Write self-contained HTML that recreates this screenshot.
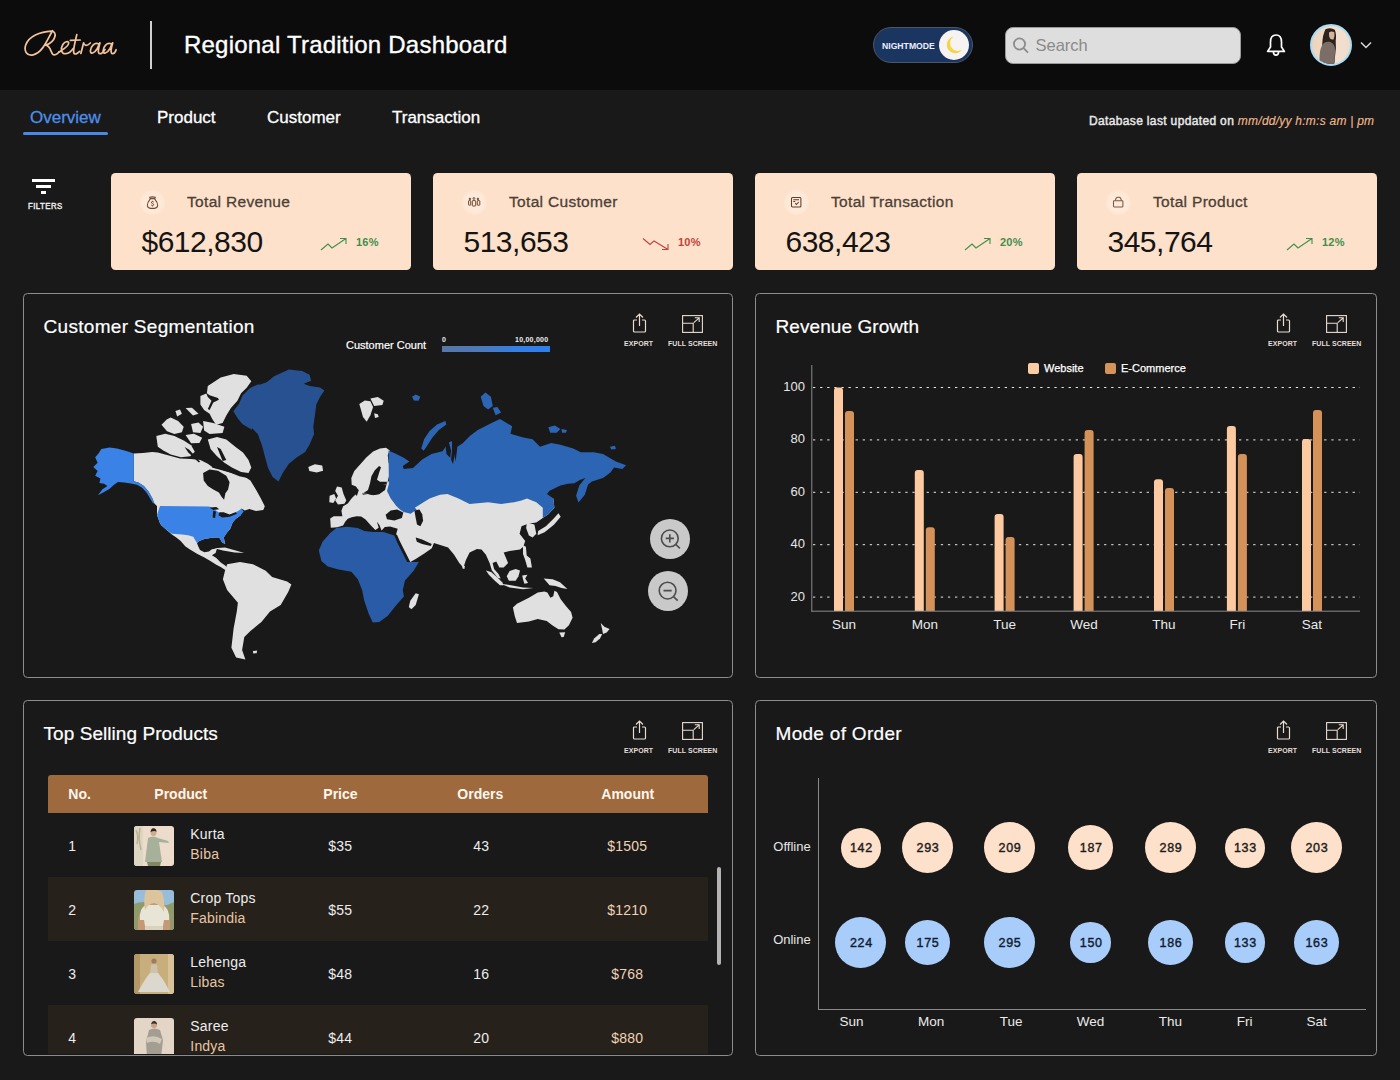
<!DOCTYPE html>
<html><head><meta charset="utf-8">
<style>
*{margin:0;padding:0;box-sizing:border-box}
html,body{width:1400px;height:1080px;overflow:hidden;background:#191919;font-family:"Liberation Sans",sans-serif;color:#fff}
.abs{position:absolute}
#hdr{position:absolute;left:0;top:0;width:1400px;height:90px;background:#0c0c0c}
.t{position:absolute;white-space:nowrap;line-height:1}
.card{position:absolute;top:173px;width:299.7px;height:97.3px;background:#fee1ca;border-radius:4.5px}
.panel{position:absolute;border:1.3px solid #8c8c8c;border-radius:4.5px;background:#191919}
.ptitle{position:absolute;left:19.5px;top:22.5px;font-size:19px;color:#fff;line-height:1;white-space:nowrap;letter-spacing:0.3px;-webkit-text-stroke:0.2px #fff}
.tool{position:absolute;top:0}
.tool .lbl{position:absolute;font-size:7.5px;font-weight:bold;color:#e6e0dc;white-space:nowrap;letter-spacing:0.3px;line-height:1}
.ic{position:absolute;left:29px;top:17px;width:25px;height:25px;border-radius:50%;background:radial-gradient(circle,#ffe9d9 50%,#fee3cf 85%,#fee1ca 100%)}
.ct{position:absolute;left:76px;top:20.8px;font-size:15.5px;letter-spacing:0.32px;color:#4b3f37;white-space:nowrap;line-height:1;-webkit-text-stroke:0.3px #4b3f37}
.cv{position:absolute;left:30.5px;top:53.6px;font-size:30px;letter-spacing:-0.5px;color:#141414;white-space:nowrap;line-height:1}
.up{left:209px;top:64px}
.cp{position:absolute;left:245px;top:64px;font-size:11px;letter-spacing:0.2px;font-weight:bold;color:#3f8f4c;white-space:nowrap;line-height:1}
.zb{width:40px;height:40px;border-radius:50%;background:#c9c9c9}
.tl{font-size:7px;font-weight:bold;color:#e3ddd8;letter-spacing:0.05px}
.yl{font-size:13px;color:#e6e6e6;text-align:right}
.xl{font-size:13.5px;color:#eaeaea;text-align:center}
.th{font-size:14px;font-weight:bold;color:#fff6ee}
.td{font-size:14px;color:#ededed;letter-spacing:0.2px}
.bub{border-radius:50%;display:flex;align-items:center;justify-content:center;font-size:12.5px;-webkit-text-stroke:0.4px currentColor;letter-spacing:0.7px;padding-left:1.5px;padding-top:1.2px}
</style></head>
<body>
<div id="hdr">
  <svg class="abs" style="left:20px;top:25px" width="100" height="35" viewBox="0 0 1400 490" fill="none" stroke="#f3c39e" stroke-width="24" stroke-linecap="round" stroke-linejoin="round"><path d="M455,80 C385,200 320,385 185,418 C95,440 52,360 80,280 C120,160 280,92 440,85 C525,85 510,235 360,282"/><path d="M360,282 C430,292 428,382 460,410 C482,430 520,410 545,378"/><path d="M545,378 C605,338 685,300 682,250 C678,218 628,232 600,272 C562,332 580,410 642,402 C682,396 722,360 745,328"/><path d="M795,135 C775,222 742,340 752,390 C762,422 802,402 835,368"/><path d="M705,215 L842,210"/><path d="M852,398 C872,330 882,282 890,250 C902,292 932,302 985,252"/><path d="M1100,262 C1040,240 990,300 985,362 C985,412 1040,402 1080,332 C1100,292 1110,262 1120,250 C1100,320 1080,402 1120,402 C1150,402 1170,372 1190,342"/><path d="M1275,262 C1215,240 1168,300 1163,362 C1163,412 1218,402 1258,332 C1278,292 1288,262 1298,250 C1278,320 1258,402 1298,402 C1320,402 1336,376 1346,346"/></svg>
  <div class="abs" style="left:150px;top:21px;width:1.5px;height:48px;background:#cfcfcf"></div>
  <div class="t" style="left:184px;top:33px;font-size:24px;color:#fff;letter-spacing:0.22px;-webkit-text-stroke:0.35px #fff">Regional Tradition Dashboard</div>
  <!-- nightmode -->
  <div class="abs" style="left:873px;top:27px;width:100px;height:36px;border-radius:18px;background:#1b3561;border:1.5px solid #4d5666"></div>
  <div class="t" style="left:882px;top:41.6px;font-size:9px;font-weight:bold;color:#eef;transform:scaleX(0.96);transform-origin:0 0">NIGHTMODE</div>
  <div class="abs" style="left:939px;top:30px;width:30px;height:30px;border-radius:50%;background:#f6f3f2"></div>
  <svg class="abs" style="left:939px;top:30px" width="30" height="30" viewBox="0 0 30 30"><path d="M14.6,6.6 A8.4,8.4 0 1 0 23.2,19.6 A6.6,6.6 0 1 1 14.6,6.6Z" fill="#f4d544"/></svg>
  <!-- search -->
  <div class="abs" style="left:1004.5px;top:26.5px;width:236px;height:37px;border-radius:8px;background:#dedede;border:1px solid #9a9a9a"></div>
  <svg class="abs" style="left:1010px;top:34px" width="22" height="22" viewBox="0 0 22 22" fill="none" stroke="#8c8c8c" stroke-width="1.8"><circle cx="9.5" cy="10" r="5.6"/><path d="M13.6,14.2 L18,18.6"/></svg>
  <div class="t" style="left:1035.5px;top:37.3px;font-size:16.5px;color:#8a8a8a">Search</div>
  <!-- bell -->
  <svg class="abs" style="left:1264px;top:32px" width="24" height="26" viewBox="0 0 24 26" fill="none" stroke="#fff" stroke-width="1.7" stroke-linejoin="round"><path d="M12,3 Q6.5,3 6.5,10 V15 L3.6,19.4 H20.4 L17.5,15 V10 Q17.5,3 12,3Z"/><path d="M9.4,20 Q9.6,23.2 12,23.2 Q14.4,23.2 14.6,20"/></svg>
  <!-- avatar -->
  <div class="abs" style="left:1310px;top:24px;width:42px;height:42px;border-radius:50%;background:linear-gradient(90deg,#ecd3bc,#f3e0cf 60%,#f1dccb);border:2px solid #a6dcf6;overflow:hidden">
    <svg width="38" height="38" viewBox="0 0 38 38"><path d="M13.5,3.3 Q18.6,0.8 22.8,3.8 Q24.6,8 23.7,14.9 Q24.4,22 23.2,28.8 L22.3,38 L12,38 Q9.5,26 10.3,17.2 Q10.6,9 13.5,3.3Z" fill="#2e221c"/><path d="M17,6.5 Q19.5,4.6 22.3,6.2 Q23,10.5 21.6,13.2 Q19.8,14.2 18,12.6 Q16.6,10 17,6.5Z" fill="#d6b59c"/><path d="M7.5,38 Q7.4,30 7.9,26.5 Q8.6,22 9.8,20 Q11.5,17 13,16.3 Q15.5,15.4 17.7,15.8 Q20,16.6 21.3,18.1 Q23,20.5 23.1,23.7 L22.3,38Z" fill="#7b6e66"/></svg>
  </div>
  <svg class="abs" style="left:1359px;top:40px" width="14" height="10" viewBox="0 0 14 10" fill="none" stroke="#d8d8d8" stroke-width="1.5"><path d="M2,2.5 L7,7.5 L12,2.5"/></svg>
</div>

<!-- nav -->
<div class="t" style="left:30px;top:109px;font-size:17px;color:#4d8fe8;-webkit-text-stroke:0.3px #4d8fe8">Overview</div>
<div class="abs" style="left:23px;top:132px;width:85px;height:3px;background:#4a8ae6;border-radius:2px"></div>
<div class="t" style="left:157px;top:109px;font-size:17px;color:#fff;-webkit-text-stroke:0.3px #fff">Product</div>
<div class="t" style="left:267px;top:109px;font-size:17px;color:#fff;-webkit-text-stroke:0.3px #fff">Customer</div>
<div class="t" style="left:392px;top:109px;font-size:17px;color:#fff;-webkit-text-stroke:0.3px #fff">Transaction</div>
<div class="t" style="left:1089px;top:115px;font-size:12px;color:#e8e8e8;-webkit-text-stroke:0.45px #e8e8e8;letter-spacing:0.35px">Database last updated on <span style="-webkit-text-stroke:0.15px #f0b88e;font-style:italic;color:#f0b88e;letter-spacing:0.24px">mm/dd/yy h:m:s am | pm</span></div>

<!-- filters -->
<div class="abs" style="left:32px;top:179px;width:23px;height:3px;background:#fff"></div>
<div class="abs" style="left:36px;top:185px;width:15px;height:3px;background:#fff"></div>
<div class="abs" style="left:41px;top:191px;width:5px;height:3px;background:#fff"></div>
<div class="t" style="left:27.7px;top:201.5px;font-size:9px;color:#f2f2f2;-webkit-text-stroke:0.4px #f2f2f2;letter-spacing:0.5px;transform:scaleX(0.87);transform-origin:0 0">FILTERS</div>

<!-- cards -->
<div class="card" style="left:111px">
  <div class="ic"></div>
  <svg class="abs" style="left:35px;top:23px" width="13" height="13" viewBox="0 0 12 12" fill="none" stroke="#6b4a33" stroke-width="1"><path d="M3.5,1.2 Q6,0.4 8.5,1.2 L8,2.6 Q6,2.2 4,2.6Z"/><path d="M4,2.6 Q1,6 1.2,9.2 Q1.6,11.2 4,11.4 L8,11.4 Q10.4,11.2 10.8,9.2 Q11,6 8,2.6"/><path d="M7.2,5.6 Q6,4.8 5,5.6 Q4.6,6.6 6,7 Q7.4,7.4 7,8.4 Q6,9.2 4.8,8.4 M6,4.5V5.2 M6,9V9.6" stroke-width="0.9"/></svg>
  <div class="ct">Total Revenue</div>
  <div class="cv">$612,830</div>
  <svg class="abs up" width="28" height="14" viewBox="0 0 28 14"><path d="M1,13 L8,7 L12,11 L26,1.5 M20,1.5 H26 V7" fill="none" stroke="#3f8f4c" stroke-width="1.1"/></svg>
  <div class="cp">16%</div>
</div>
<div class="card" style="left:433px">
  <div class="ic"></div>
  <svg class="abs" style="left:35px;top:23px" width="14" height="13" viewBox="0 0 14 13" fill="none" stroke="#6a4930" stroke-width="1"><circle cx="1.9" cy="2.9" r="0.75" fill="#6a4930"/><circle cx="5.9" cy="2.5" r="0.9"/><circle cx="9.9" cy="2.9" r="0.75" fill="#6a4930"/><rect x="0.6" y="4.6" width="2.1" height="4.6" rx="0.5"/><rect x="4.3" y="4.6" width="3.4" height="5.4" rx="0.6"/><rect x="9.3" y="4.6" width="2.5" height="4.6" rx="0.5"/></svg>
  <div class="ct">Total Customer</div>
  <div class="cv">513,653</div>
  <svg class="abs up" width="28" height="14" viewBox="0 0 28 14"><path d="M1,1.5 L8,7.5 L12,4 L26,12.5 M20,12.5 H26 V7" fill="none" stroke="#c2413b" stroke-width="1.1"/></svg>
  <div class="cp" style="color:#c2413b">10%</div>
</div>
<div class="card" style="left:755px">
  <div class="ic"></div>
  <svg class="abs" style="left:35px;top:23px" width="14" height="13" viewBox="0 0 14 13" fill="none" stroke="#5e3f28" stroke-width="1.05"><rect x="1.5" y="1.5" width="9.4" height="9.4" rx="1"/><path d="M3.3,3.7 H9 M3.3,5.4 H5.2 M5.3,7.1 L6.4,8.5 L8.7,6"/></svg>
  <div class="ct">Total Transaction</div>
  <div class="cv">638,423</div>
  <svg class="abs up" width="28" height="14" viewBox="0 0 28 14"><path d="M1,13 L8,7 L12,11 L26,1.5 M20,1.5 H26 V7" fill="none" stroke="#3f8f4c" stroke-width="1.1"/></svg>
  <div class="cp">20%</div>
</div>
<div class="card" style="left:1077px">
  <div class="ic"></div>
  <svg class="abs" style="left:35px;top:23px" width="14" height="13" viewBox="0 0 14 13" fill="none" stroke="#755a45" stroke-width="1.05"><rect x="1.5" y="4.8" width="9.4" height="6.1" rx="0.6"/><path d="M3.4,4.5 Q3.9,1.3 5.6,1.3 H7.2 Q8.9,1.3 9.3,4.5"/></svg>
  <div class="ct">Total Product</div>
  <div class="cv">345,764</div>
  <svg class="abs up" width="28" height="14" viewBox="0 0 28 14"><path d="M1,13 L8,7 L12,11 L26,1.5 M20,1.5 H26 V7" fill="none" stroke="#3f8f4c" stroke-width="1.1"/></svg>
  <div class="cp">12%</div>
</div>

<!-- panels -->
<div class="panel" style="left:23px;top:293px;width:710px;height:385px"><div class="ptitle">Customer Segmentation</div>
  <svg class="abs" style="left:608px;top:19px" width="15" height="20" viewBox="0 0 15 20" fill="none" stroke="#e9ddd2" stroke-width="1.2"><path d="M7.5,1 V13 M4,4.5 L7.5,1 L11,4.5"/><path d="M5,7 H2.5 Q1.5,7 1.5,8 V18 Q1.5,19 2.5,19 H12.5 Q13.5,19 13.5,18 V8 Q13.5,7 12.5,7 H10"/></svg>
<div class="t tl" style="left:600px;top:46.4px">EXPORT</div>
<svg class="abs" style="left:658px;top:21px" width="21" height="18" viewBox="0 0 21 18" fill="none" stroke="#e9ddd2" stroke-width="1.1"><rect x="0.6" y="0.6" width="19.8" height="16.8"/><path d="M0.6,8.2 H11.2 V17.4 M11.8,7.6 L17.2,2.8 M12.8,2.8 H17.2 V7"/></svg>
<div class="t tl" style="left:644px;top:46.4px">FULL SCREEN</div>
  <div class="t" style="left:322px;top:46px;font-size:11px;color:#fff;-webkit-text-stroke:0.2px #fff">Customer Count</div>
  <div class="t" style="left:418px;top:41.5px;font-size:7px;font-weight:bold;color:#eee">0</div>
  <div class="t" style="left:491px;top:41.5px;font-size:7px;font-weight:bold;color:#eee;letter-spacing:0.25px">10,00,000</div>
  <div class="abs" style="left:418px;top:52px;width:108px;height:6px;background:linear-gradient(90deg,#5877a6 0%,#4f79b8 35%,#3380e6 70%,#2f7fea 100%)"></div>
  <div class="abs zb" style="left:626px;top:225.2px"><svg width="40" height="40" viewBox="0 0 40 40" fill="none" stroke="#4d4d4d" stroke-width="1.6"><circle cx="19.8" cy="19.4" r="8.4"/><path d="M25.7,25.4 L29.9,29.4 M19.8,15.3 V23.5 M15.7,19.4 H23.9"/></svg></div>
  <div class="abs zb" style="left:624.2px;top:277.3px"><svg width="40" height="40" viewBox="0 0 40 40" fill="none" stroke="#4d4d4d" stroke-width="1.6"><circle cx="19.6" cy="19.6" r="8.4"/><path d="M25.5,25.6 L29.7,29.6 M15.5,19.6 H23.7"/></svg></div>
</div>
<svg class="abs" style="left:80px;top:360px" width="570" height="310" viewBox="80 360 570 310"><path fill="#e0e0e0" d="M133.7,453.5 143.0,453.0 152.2,451.9 157.8,452.6 168.9,455.4 180.0,458.5 191.1,459.1 200.4,460.0 207.8,463.7 213.3,467.8 224.4,471.1 235.6,473.9 244.8,476.7 250.4,480.4 255.9,489.6 260.6,498.0 264.8,506.3 263.3,510.0 255.9,510.9 249.4,509.1 244.8,510.4 241.5,508.5 240.7,515.2 235.6,518.9 232.6,522.6 230.4,528.5 226.7,533.0 223.7,537.4 225.2,544.1 222.2,542.6 219.3,537.4 214.8,537.4 210.4,538.1 204.4,538.9 199.3,541.1 197.0,543.3 198.2,546.3 200.0,550.0 204.4,552.2 208.9,551.5 211.9,549.3 217.0,548.5 215.6,553.0 211.9,555.2 216.3,558.1 220.7,562.6 225.2,565.6 227.4,568.5 225.2,570.0 220.7,567.0 216.3,564.8 210.4,561.1 204.4,557.4 197.0,553.7 189.6,549.3 185.2,546.3 180.7,541.1 176.3,537.4 171.9,534.4 166.7,530.0 161.5,525.6 160.0,523.3 157.0,515.0 157.0,506.0 154.4,503.5 152.2,498.0 148.5,491.5 143.9,485.9 138.3,482.6 133.7,481.3Z"/><path fill="#3a82e6" d="M160.0,506.0 208.9,506.6 213.3,508.5 218.5,512.2 222.2,515.2 226.7,515.9 232.6,513.7 238.5,510.7 241.5,508.5 243.7,511.5 240.7,515.2 235.6,518.9 232.6,522.6 230.4,528.5 226.7,533.0 223.7,537.4 225.2,544.1 222.2,542.6 219.3,537.4 214.8,537.4 210.4,538.1 204.4,538.9 199.3,541.1 197.0,543.3 193.3,536.7 188.1,535.2 182.2,534.4 171.9,533.7 166.7,530.0 161.5,525.6 160.0,523.3 157.0,515.0Z"/><path fill="#191919" d="M209.6,507.5 216.3,507.0 219.3,509.3 213.3,510.0Z"/><path fill="#191919" d="M213.3,510.7 216.0,511.5 215.1,518.1 212.6,517.4Z"/><path fill="#191919" d="M219.3,512.2 223.7,512.2 229.6,514.4 235.6,512.2 237.0,513.7 229.6,516.7 222.2,517.4 218.5,515.2Z"/><path fill="#191919" d="M203.1,473.0 209.6,469.6 218.0,470.7 226.3,475.7 229.6,482.2 228.1,489.6 225.4,493.3 224.1,499.8 221.7,497.0 218.9,492.4 213.3,489.6 207.8,485.9 203.7,480.4Z"/><path fill="#191919" d="M211.5,464.6 220.7,463.3 231.9,467.8 243.0,473.3 247.6,478.1 239.3,476.3 230.0,472.6 220.7,469.3 212.4,467.8Z"/><path fill="#3a82e6" d="M101.3,448.9 109.6,447.4 117.0,448.5 126.3,451.1 133.7,453.5 133.7,481.3 138.3,482.6 143.9,485.9 148.5,491.5 152.2,498.0 154.4,503.5 152.8,503.0 150.2,498.5 146.5,492.6 142.2,487.8 137.0,484.8 132.2,483.7 124.4,482.6 118.0,481.9 114.3,484.4 109.6,488.7 104.1,491.9 98.0,495.2 102.2,489.6 107.4,485.9 104.1,483.7 99.4,483.1 100.4,478.5 95.2,475.7 97.6,471.1 93.3,467.0 97.6,462.8 95.2,457.2 98.5,453.5Z"/><path fill="#e0e0e0" d="M200.4,396.1 206.9,393.3 207.8,385.9 220.7,377.6 233.7,373.9 246.7,375.7 251.3,381.3 246.7,387.8 241.1,393.3 237.4,400.7 230.9,408.1 226.3,415.6 222.6,423.0 216.1,424.8 212.4,419.3 209.6,413.7 204.1,410.0 200.4,404.4Z"/><path fill="#e0e0e0" d="M161.5,424.8 166.7,419.6 170.7,417.4 178.1,421.1 183.7,426.7 181.9,432.2 174.4,434.1 167.0,431.3Z"/><path fill="#e0e0e0" d="M175.4,410.9 180.0,409.6 181.9,413.7 177.2,416.5Z"/><path fill="#e0e0e0" d="M185.6,408.1 192.0,407.8 198.5,413.7 193.0,415.6Z"/><path fill="#e0e0e0" d="M191.1,423.9 198.5,422.6 203.1,426.7 200.4,433.1 193.0,432.2Z"/><path fill="#e0e0e0" d="M203.1,421.1 213.3,423.0 224.4,426.7 222.6,433.1 209.6,434.1 204.1,430.4Z"/><path fill="#e0e0e0" d="M156.3,435.9 165.2,433.7 174.4,435.9 183.7,440.6 191.1,445.2 194.8,451.7 190.2,456.3 180.9,457.2 170.7,454.4 163.3,450.4 157.8,446.7Z"/><path fill="#e0e0e0" d="M185.6,435.0 193.9,433.7 202.2,437.8 199.4,443.0 191.1,443.3Z"/><path fill="#e0e0e0" d="M207.8,439.6 217.0,436.9 226.3,439.6 235.6,447.0 243.0,452.6 248.5,460.0 251.3,467.4 248.5,473.0 241.1,472.0 231.9,467.4 224.4,462.8 217.0,456.3 210.6,448.9Z"/><path fill="#191919" d="M205.9,392.4 209.6,395.2 218.0,398.0 218.9,399.8 213.3,402.6 209.6,410.0 207.8,409.1 211.5,400.7 207.8,397.0Z"/><path fill="#191919" d="M184.6,447.0 189.3,449.8 200.4,461.9 198.5,462.2 188.3,452.6Z"/><path fill="#191919" d="M217.0,447.0 220.7,448.9 226.3,460.0 222.6,460.9Z"/><path fill="#275190" d="M274.1,376.3 288.9,369.6 302.2,371.1 309.6,374.8 311.1,380.7 303.7,383.7 309.6,385.9 320.0,387.4 324.4,390.4 320.0,397.0 316.3,404.4 314.8,416.3 313.3,426.7 314.1,434.1 309.6,444.4 305.2,451.9 296.3,457.8 288.9,463.7 283.0,472.6 278.5,481.5 272.6,477.0 268.1,468.1 265.2,457.8 262.2,445.9 257.8,434.1 251.9,428.1 251.9,429.8 242.6,424.3 238.0,418.7 233.3,411.3 238.9,403.9 242.6,395.6 250.0,388.1 260.0,383.5 257.8,385.2 266.7,382.2Z"/><path fill="#e0e0e0" d="M330.8,527.8 330.2,518.6 333.7,516.2 342.4,516.2 341.4,510.8 343.1,506.3 347.8,503.4 351.7,498.3 355.5,494.4 356.8,496.0 360.3,485.7 362.8,494.7 368.0,494.1 373.1,495.3 379.1,494.3 385.1,490.0 386.4,484.8 387.7,481.4 396.3,480.0 429.6,483.7 495.6,483.7 542.8,494.8 553.3,498.5 554.4,507.8 548.3,514.3 542.8,518.0 536.3,522.6 528.9,523.5 521.5,526.3 519.6,533.7 525.2,541.1 523.3,546.7 520.0,549.6 509.6,551.1 503.7,552.6 505.9,557.8 508.1,563.0 503.7,567.4 499.3,567.4 496.3,561.5 492.6,563.0 494.1,568.9 498.5,574.1 500.7,578.5 497.8,577.8 491.9,570.4 489.6,563.0 485.9,554.8 481.5,549.6 477.0,548.9 469.6,552.6 465.9,560.0 463.4,567.7 459.3,563.0 454.1,554.8 448.1,547.4 433.9,542.9 431.8,548.2 424.3,553.6 415.7,558.9 410.3,562.1 405.0,551.4 399.6,540.7 396.8,534.3 395.8,535.3 397.7,528.8 390.0,526.5 384.8,526.9 381.6,530.4 379.4,525.0 376.9,521.8 378.7,527.8 375.3,530.1 370.7,525.2 365.6,519.6 361.2,516.5 356.6,516.2 351.7,517.3 347.8,518.8 345.2,521.8 343.1,525.6 337.3,527.3Z"/><path fill="#e0e0e0" d="M351.7,484.8 351.3,478.0 354.3,471.1 360.3,464.3 366.3,457.4 373.1,451.4 380.0,448.4 386.0,447.8 389.8,450.6 387.7,454.9 388.6,462.6 390.3,468.6 389.4,474.6 387.7,481.4 386.4,484.8 380.0,484.8 376.6,489.1 373.1,493.4 366.3,493.8 362.8,493.4 357.7,489.1 356.0,486.6Z"/><path fill="#191919" d="M379.1,466.0 381.0,467.3 379.1,472.8 377.0,479.7 380.0,481.8 386.8,481.8 386.8,484.2 381.7,485.3 383.8,489.1 379.1,493.8 373.1,495.0 366.7,493.8 363.3,493.2 368.0,490.0 370.1,483.1 371.4,476.3 374.8,470.3Z"/><path fill="#e0e0e0" d="M527.0,522.6 534.4,524.4 536.3,533.7 532.6,537.4 528.9,535.6 526.1,528.1Z"/><path fill="#e0e0e0" d="M558.5,513.3 560.7,516.7 553.9,524.8 544.6,532.2 537.6,535.2 538.1,530.9 545.9,526.3 553.0,519.3Z"/><path fill="#2d65b5" d="M388.5,450.4 396.3,454.1 403.7,457.8 409.3,461.5 402.8,466.1 403.7,468.9 413.0,468.0 422.2,459.6 431.5,454.1 442.6,451.3 448.1,443.0 451.9,441.1 453.7,450.4 455.6,461.5 457.4,446.7 463.0,443.0 470.4,435.6 477.8,430.0 485.2,426.3 492.6,422.6 500.0,418.9 512.2,426.3 510.4,433.7 523.3,437.4 532.6,439.3 540.0,446.7 551.1,443.0 560.4,444.8 573.3,448.5 580.7,452.2 593.7,452.2 603.0,454.1 615.9,461.5 626.1,465.2 622.4,468.9 614.1,467.4 610.4,472.6 603.0,478.1 591.9,481.5 588.1,484.6 584.8,494.8 578.5,502.6 576.1,495.7 579.3,485.6 585.4,478.1 579.8,480.0 574.3,483.3 567.8,483.7 560.4,485.6 549.6,490.7 547.0,493.9 553.3,498.5 554.4,507.8 548.3,514.3 542.8,518.0 542.8,507.8 536.3,502.2 527.0,498.5 521.5,500.4 514.1,502.2 501.1,504.1 488.1,502.2 469.6,504.1 458.5,498.5 447.4,493.9 440.0,494.8 429.6,498.5 414.8,507.8 416.7,509.6 410.7,513.7 403.7,511.9 400.0,509.6 396.3,505.9 390.7,498.5 387.0,491.1 388.9,483.7Z"/><path fill="#191919" d="M443.7,441.1 448.3,440.2 451.1,450.4 450.2,457.8 446.5,454.1 445.6,446.7Z"/><path fill="#191919" d="M452.0,441.1 455.7,443.0 454.8,454.1 453.0,464.3 451.1,459.6 452.0,450.4Z"/><path fill="#2d65b5" d="M480.7,396.7 485.4,392.6 490.9,396.7 492.8,405.9 488.1,409.6 483.5,405.9Z"/><path fill="#2d65b5" d="M492.8,407.8 497.4,406.9 501.1,412.4 495.6,415.2Z"/><path fill="#2d65b5" d="M548.3,427.2 554.8,425.4 560.4,429.1 556.7,432.8 550.2,432.8Z"/><path fill="#2d65b5" d="M561.3,429.1 566.9,430.0 565.9,432.8 562.2,432.8Z"/><path fill="#2d65b5" d="M610.0,446.7 615.0,445.7 615.9,448.9 611.3,449.4Z"/><path fill="#2d65b5" d="M421.3,448.5 424.1,439.3 429.6,430.9 437.0,424.4 445.4,421.1 446.3,424.4 438.9,430.0 432.4,437.4 427.8,444.8 423.7,450.7Z"/><path fill="#2d65b5" d="M412.0,396.7 415.7,394.4 420.4,396.7 418.5,400.7 413.9,400.4Z"/><path fill="#191919" d="M385.6,514.8 390.7,510.6 397.2,509.6 403.3,512.4 401.9,518.0 394.4,520.4 387.0,519.3Z"/><path fill="#191919" d="M414.4,510.6 419.4,509.6 422.2,514.3 423.1,520.7 420.4,526.3 417.0,524.4 415.7,518.0Z"/><path fill="#191919" d="M415.7,537.5 422.1,539.6 431.8,543.9 430.7,546.1 422.1,543.9 416.8,541.8Z"/><path fill="#e0e0e0" d="M337.0,486.5 341.7,487.4 343.5,493.9 346.3,500.4 344.4,503.7 338.0,504.4 335.2,500.4 338.0,495.7 335.2,491.1Z"/><path fill="#e0e0e0" d="M329.6,495.7 334.3,493.9 336.1,498.5 333.3,503.1 329.3,502.2Z"/><path fill="#e0e0e0" d="M308.3,467.0 314.8,464.3 322.2,465.6 323.1,470.7 316.7,472.6 309.3,471.1Z"/><path fill="#e0e0e0" d="M359.3,404.1 364.8,400.4 370.4,401.3 373.1,406.9 370.4,415.2 366.7,421.7 363.0,417.0Z"/><path fill="#e0e0e0" d="M370.4,398.5 377.8,397.0 383.7,400.7 382.4,405.0 374.1,405.9Z"/><path fill="#e0e0e0" d="M374.1,413.3 377.8,414.3 378.7,417.0 375.0,418.0Z"/><path fill="#2a5ba6" d="M318.8,550.4 322.5,541.8 330.0,533.2 336.4,527.9 347.1,526.8 357.8,527.9 364.3,531.1 372.8,532.1 383.6,532.1 394.3,535.4 397.5,542.9 402.8,553.6 407.1,562.1 418.9,562.1 413.6,570.7 405.0,580.4 402.8,590.0 403.9,596.4 396.4,605.0 387.8,615.7 379.3,622.1 372.8,622.6 368.6,613.6 364.3,600.7 362.1,590.0 357.8,579.3 351.4,571.8 338.6,569.6 327.8,566.4 321.4,561.1Z"/><path fill="#e0e0e0" d="M410.3,600.7 415.7,593.2 418.9,594.3 415.7,605.0 411.4,609.3 408.8,607.1Z"/><path fill="#e0e0e0" d="M225.0,570.7 227.1,564.3 240.0,562.1 252.9,564.3 265.7,570.7 272.1,577.1 287.1,581.4 291.4,584.6 288.2,592.1 280.7,605.0 270.0,611.4 261.4,622.1 250.7,630.7 244.3,637.1 242.1,650.0 245.4,659.6 236.1,657.5 231.4,647.8 233.6,628.6 236.8,611.4 237.9,602.8 227.1,590.0 222.9,579.3Z"/><path fill="#e0e0e0" d="M214.3,548.2 225.0,547.6 235.7,550.4 244.3,553.1 234.6,552.5 222.9,550.4Z"/><path fill="#e0e0e0" d="M252.9,651.1 257.1,650.6 256.7,653.2 253.3,653.4Z"/><path fill="#e0e0e0" d="M485.9,570.4 491.1,571.9 497.0,577.0 502.2,582.2 503.7,585.2 500.0,585.2 494.8,580.7 488.9,574.8Z"/><path fill="#e0e0e0" d="M506.7,576.3 509.6,571.1 515.6,568.9 520.0,570.4 518.5,576.3 515.6,580.7 508.9,580.7Z"/><path fill="#e0e0e0" d="M500.7,583.7 511.1,585.2 523.0,587.4 533.3,588.1 523.0,589.3 509.6,587.4Z"/><path fill="#e0e0e0" d="M522.2,575.6 527.4,574.8 525.2,578.5 528.1,583.0 524.4,583.7 523.0,579.3Z"/><path fill="#e0e0e0" d="M523.0,545.2 525.9,546.7 526.7,555.6 530.4,558.5 531.9,567.4 527.4,567.4 525.2,560.0 523.0,554.1Z"/><path fill="#e0e0e0" d="M543.7,578.5 552.6,579.3 560.0,582.2 567.4,588.9 561.5,588.1 555.6,585.9 549.6,585.2Z"/><path fill="#e0e0e0" d="M512.9,607.4 517.0,603.7 528.9,597.8 537.8,592.6 544.4,591.4 547.4,592.6 550.4,597.8 553.3,596.3 554.4,590.8 557.0,591.9 560.7,599.3 565.9,605.9 571.1,611.9 572.6,617.8 568.9,625.2 564.4,629.6 558.5,629.3 552.6,625.5 546.7,621.0 537.8,619.0 528.9,621.5 517.0,623.0 514.8,616.3Z"/><path fill="#e0e0e0" d="M559.3,632.6 565.2,632.3 563.7,637.0 561.5,637.3Z"/><path fill="#e0e0e0" d="M600.7,623.0 604.4,626.7 609.6,628.9 606.7,632.6 603.0,634.1 602.2,629.6Z"/><path fill="#e0e0e0" d="M602.2,634.1 600.0,638.5 595.6,642.2 591.9,643.0 594.1,638.5 599.3,634.1Z"/><path fill="#e0e0e0" d="M462.2,565.2 464.9,565.9 464.4,568.9 462.5,568.6Z"/></svg>
<div class="panel" style="left:755px;top:293px;width:622px;height:385px"><div class="ptitle" style="letter-spacing:0.07px">Revenue Growth</div>
  <svg class="abs" style="left:520px;top:19px" width="15" height="20" viewBox="0 0 15 20" fill="none" stroke="#e9ddd2" stroke-width="1.2"><path d="M7.5,1 V13 M4,4.5 L7.5,1 L11,4.5"/><path d="M5,7 H2.5 Q1.5,7 1.5,8 V18 Q1.5,19 2.5,19 H12.5 Q13.5,19 13.5,18 V8 Q13.5,7 12.5,7 H10"/></svg>
<div class="t tl" style="left:512px;top:46.4px">EXPORT</div>
<svg class="abs" style="left:570px;top:21px" width="21" height="18" viewBox="0 0 21 18" fill="none" stroke="#e9ddd2" stroke-width="1.1"><rect x="0.6" y="0.6" width="19.8" height="16.8"/><path d="M0.6,8.2 H11.2 V17.4 M11.8,7.6 L17.2,2.8 M12.8,2.8 H17.2 V7"/></svg>
<div class="t tl" style="left:556px;top:46.4px">FULL SCREEN</div>
  <div class="abs" style="left:272px;top:69px;width:11px;height:11px;border-radius:2px;background:#fdcba1"></div>
  <div class="t" style="left:288px;top:69px;font-size:11px;color:#fff;-webkit-text-stroke:0.25px #fff">Website</div>
  <div class="abs" style="left:349px;top:69px;width:11px;height:11px;border-radius:2px;background:#d4935b"></div>
  <div class="t" style="left:365px;top:69px;font-size:11px;color:#fff;-webkit-text-stroke:0.25px #fff">E-Commerce</div>
</div>
<svg class="abs" style="left:760px;top:355px" width="610" height="290" viewBox="760 355 610 290"><line x1="813" y1="387.5" x2="1360" y2="387.5" stroke="#e8e8e8" stroke-width="1" stroke-dasharray="2.3 4.8"/><line x1="813" y1="439.9" x2="1360" y2="439.9" stroke="#e8e8e8" stroke-width="1" stroke-dasharray="2.3 4.8"/><line x1="813" y1="492.3" x2="1360" y2="492.3" stroke="#e8e8e8" stroke-width="1" stroke-dasharray="2.3 4.8"/><line x1="813" y1="544.7" x2="1360" y2="544.7" stroke="#e8e8e8" stroke-width="1" stroke-dasharray="2.3 4.8"/><line x1="813" y1="597.1" x2="1360" y2="597.1" stroke="#e8e8e8" stroke-width="1" stroke-dasharray="2.3 4.8"/><path d="M834,611 V390.5 Q834,387.5 837,387.5 H840 Q843,387.5 843,390.5 V611Z" fill="#fdc9a0"/><path d="M845,611 V414.08000000000004 Q845,411.08000000000004 848,411.08000000000004 H851 Q854,411.08000000000004 854,414.08000000000004 V611Z" fill="#d4925a"/><path d="M914.8,611 V473.03000000000003 Q914.8,470.03000000000003 917.8,470.03000000000003 H920.8 Q923.8,470.03000000000003 923.8,473.03000000000003 V611Z" fill="#fdc9a0"/><path d="M925.8,611 V530.146 Q925.8,527.146 928.8,527.146 H931.8 Q934.8,527.146 934.8,530.146 V611Z" fill="#d4925a"/><path d="M994.6,611 V517.046 Q994.6,514.046 997.6,514.046 H1000.6 Q1003.6,514.046 1003.6,517.046 V611Z" fill="#fdc9a0"/><path d="M1005.6,611 V540.102 Q1005.6,537.102 1008.6,537.102 H1011.6 Q1014.6,537.102 1014.6,540.102 V611Z" fill="#d4925a"/><path d="M1073.6,611 V457.048 Q1073.6,454.048 1076.6,454.048 H1079.6 Q1082.6,454.048 1082.6,457.048 V611Z" fill="#fdc9a0"/><path d="M1084.6,611 V432.944 Q1084.6,429.944 1087.6,429.944 H1090.6 Q1093.6,429.944 1093.6,432.944 V611Z" fill="#d4925a"/><path d="M1154,611 V482.20000000000005 Q1154,479.20000000000005 1157,479.20000000000005 H1160 Q1163,479.20000000000005 1163,482.20000000000005 V611Z" fill="#fdc9a0"/><path d="M1165,611 V491.108 Q1165,488.108 1168,488.108 H1171 Q1174,488.108 1174,491.108 V611Z" fill="#d4925a"/><path d="M1226.9,611 V429.014 Q1226.9,426.014 1229.9,426.014 H1232.9 Q1235.9,426.014 1235.9,429.014 V611Z" fill="#fdc9a0"/><path d="M1237.9,611 V457.048 Q1237.9,454.048 1240.9,454.048 H1243.9 Q1246.9,454.048 1246.9,457.048 V611Z" fill="#d4925a"/><path d="M1302,611 V442.11400000000003 Q1302,439.11400000000003 1305,439.11400000000003 H1308 Q1311,439.11400000000003 1311,442.11400000000003 V611Z" fill="#fdc9a0"/><path d="M1313,611 V413.03200000000004 Q1313,410.03200000000004 1316,410.03200000000004 H1319 Q1322,410.03200000000004 1322,413.03200000000004 V611Z" fill="#d4925a"/><line x1="811.8" y1="365" x2="811.8" y2="611.5" stroke="#8a8a8a" stroke-width="1"/><line x1="811.3" y1="611.2" x2="1360" y2="611.2" stroke="#8a8a8a" stroke-width="1"/></svg><div class="t yl" style="left:745px;top:380.0px;width:60px">100</div><div class="t yl" style="left:745px;top:432.4px;width:60px">80</div><div class="t yl" style="left:745px;top:484.8px;width:60px">60</div><div class="t yl" style="left:745px;top:537.2px;width:60px">40</div><div class="t yl" style="left:745px;top:589.6px;width:60px">20</div><div class="t xl" style="left:814px;top:618px;width:60px">Sun</div><div class="t xl" style="left:894.8px;top:618px;width:60px">Mon</div><div class="t xl" style="left:974.6px;top:618px;width:60px">Tue</div><div class="t xl" style="left:1054px;top:618px;width:60px">Wed</div><div class="t xl" style="left:1134px;top:618px;width:60px">Thu</div><div class="t xl" style="left:1207.3px;top:618px;width:60px">Fri</div><div class="t xl" style="left:1282px;top:618px;width:60px">Sat</div>
<div class="panel" style="left:23px;top:700px;width:710px;height:356px;overflow:hidden"><div class="ptitle" style="letter-spacing:0.06px">Top Selling Products</div>
  <svg class="abs" style="left:608px;top:19px" width="15" height="20" viewBox="0 0 15 20" fill="none" stroke="#e9ddd2" stroke-width="1.2"><path d="M7.5,1 V13 M4,4.5 L7.5,1 L11,4.5"/><path d="M5,7 H2.5 Q1.5,7 1.5,8 V18 Q1.5,19 2.5,19 H12.5 Q13.5,19 13.5,18 V8 Q13.5,7 12.5,7 H10"/></svg>
<div class="t tl" style="left:600px;top:46.4px">EXPORT</div>
<svg class="abs" style="left:658px;top:21px" width="21" height="18" viewBox="0 0 21 18" fill="none" stroke="#e9ddd2" stroke-width="1.1"><rect x="0.6" y="0.6" width="19.8" height="16.8"/><path d="M0.6,8.2 H11.2 V17.4 M11.8,7.6 L17.2,2.8 M12.8,2.8 H17.2 V7"/></svg>
<div class="t tl" style="left:644px;top:46.4px">FULL SCREEN</div>
  <div class="abs" style="left:24.3px;top:74px;width:660px;height:279px;overflow:hidden"><div class="abs" style="left:0;top:0;width:660px;height:38px;background:#9e693d;border-radius:3px 3px 0 0"></div><div class="t th" style="left:20px;top:12.3px">No.</div><div class="t th" style="left:106px;top:12.3px">Product</div><div class="t th" style="left:275px;top:12.3px">Price</div><div class="t th" style="left:409px;top:12.3px">Orders</div><div class="t th" style="left:553px;top:12.3px">Amount</div><div class="t td" style="left:20px;top:64px">1</div><div class="abs" style="left:86px;top:51px;width:40px;height:40px;border-radius:3px;overflow:hidden"><svg width="40" height="40" viewBox="0 0 40 40"><rect width="40" height="40" fill="#eddccb"/><rect x="0" y="0" width="9" height="40" fill="#dcd6c2"/><path d="M2,4 Q5,10 3,18 M6,2 Q4,12 7,24" stroke="#b9b394" stroke-width="1.5" fill="none"/><path d="M14,12 Q19,9 24,12 L34,15 L35,17 L25,16 L28,36 L11,36 L13,20Z" fill="#a7b09a"/><path d="M13,36 L27,36 L26,40 L14,40Z" fill="#7f8862"/><ellipse cx="19.5" cy="6.5" rx="3" ry="3.6" fill="#d2ab8e"/><path d="M16.5,6 Q17,2 19.5,2.2 Q22.5,2.5 22.5,6 Q21,4 16.5,6Z" fill="#2e241d"/></svg></div><div class="t td" style="left:142px;top:52.3px">Kurta</div><div class="t td" style="left:142px;top:72px;color:#e6c6a4">Biba</div><div class="t td" style="left:252px;top:64px;width:80px;text-align:center">$35</div><div class="t td" style="left:393px;top:64px;width:80px;text-align:center">43</div><div class="t td" style="left:539px;top:64px;width:80px;text-align:center;color:#f0d2b4">$1505</div><div class="abs" style="left:0;top:102px;width:660px;height:64px;background:#27211b"></div><div class="t td" style="left:20px;top:128px">2</div><div class="abs" style="left:86px;top:115px;width:40px;height:40px;border-radius:3px;overflow:hidden"><svg width="40" height="40" viewBox="0 0 40 40"><rect width="40" height="40" fill="#97bddb"/><path d="M0,14 Q10,10 20,14 T40,12 V40 H0Z" fill="#8f9b6b"/><path d="M4,40 Q3,26 8,18 Q14,12 20,13 Q28,12 33,18 Q37,26 36,40Z" fill="#c49a76"/><path d="M6,30 Q5,18 12,15 L28,15 Q36,18 35,30 L30,30 L29,36 L11,36 L10,30Z" fill="#e8e4d6"/><path d="M11,36 L29,36 L29,40 L11,40Z" fill="#d9d2bf"/><path d="M12,0 Q20,-2 28,2 Q31,10 30,22 Q26,14 20,13 Q14,14 11,20 Q9,8 12,0Z" fill="#dcc59c"/></svg></div><div class="t td" style="left:142px;top:116.3px">Crop Tops</div><div class="t td" style="left:142px;top:136px;color:#e6c6a4">Fabindia</div><div class="t td" style="left:252px;top:128px;width:80px;text-align:center">$55</div><div class="t td" style="left:393px;top:128px;width:80px;text-align:center">22</div><div class="t td" style="left:539px;top:128px;width:80px;text-align:center;color:#f0d2b4">$1210</div><div class="t td" style="left:20px;top:192px">3</div><div class="abs" style="left:86px;top:179px;width:40px;height:40px;border-radius:3px;overflow:hidden"><svg width="40" height="40" viewBox="0 0 40 40"><rect width="40" height="40" fill="#c9ae7d"/><rect x="0" y="0" width="6" height="40" fill="#b39766"/><rect x="34" y="0" width="6" height="40" fill="#d8c398"/><path d="M17,11 Q20,9 23,11 L24,20 L16,20Z" fill="#cfc2aa"/><path d="M16,19 L24,19 Q30,26 36,38 L4,38 Q10,26 16,19Z" fill="#ddd8cd"/><circle cx="20" cy="7" r="2.6" fill="#9c7b5e"/></svg></div><div class="t td" style="left:142px;top:180.3px">Lehenga</div><div class="t td" style="left:142px;top:200px;color:#e6c6a4">Libas</div><div class="t td" style="left:252px;top:192px;width:80px;text-align:center">$48</div><div class="t td" style="left:393px;top:192px;width:80px;text-align:center">16</div><div class="t td" style="left:539px;top:192px;width:80px;text-align:center;color:#f0d2b4">$768</div><div class="abs" style="left:0;top:230px;width:660px;height:64px;background:#27211b"></div><div class="t td" style="left:20px;top:256px">4</div><div class="abs" style="left:86px;top:243px;width:40px;height:40px;border-radius:3px;overflow:hidden"><svg width="40" height="40" viewBox="0 0 40 40"><rect width="40" height="40" fill="#e4d6c6"/><path d="M15,12 Q20,9 26,12 L29,22 L27,40 L13,40 L12,24Z" fill="#a39d92"/><path d="M12,20 Q20,16 28,21 L26,26 Q20,22 13,25Z" fill="#cfc7b8"/><circle cx="20" cy="7" r="3" fill="#c9a385"/><path d="M17,6 Q18,2.5 20.5,3 Q23,3.5 23,6.5 Q21,5 17,6Z" fill="#3a2e26"/></svg></div><div class="t td" style="left:142px;top:244.3px">Saree</div><div class="t td" style="left:142px;top:264px;color:#e6c6a4">Indya</div><div class="t td" style="left:252px;top:256px;width:80px;text-align:center">$44</div><div class="t td" style="left:393px;top:256px;width:80px;text-align:center">20</div><div class="t td" style="left:539px;top:256px;width:80px;text-align:center;color:#f0d2b4">$880</div></div><div class="abs" style="left:693px;top:166px;width:3.5px;height:98px;border-radius:2px;background:#b4b4b4"></div>
</div>
<div class="panel" style="left:755px;top:700px;width:622px;height:356px"><div class="ptitle">Mode of Order</div>
  <svg class="abs" style="left:520px;top:19px" width="15" height="20" viewBox="0 0 15 20" fill="none" stroke="#e9ddd2" stroke-width="1.2"><path d="M7.5,1 V13 M4,4.5 L7.5,1 L11,4.5"/><path d="M5,7 H2.5 Q1.5,7 1.5,8 V18 Q1.5,19 2.5,19 H12.5 Q13.5,19 13.5,18 V8 Q13.5,7 12.5,7 H10"/></svg>
<div class="t tl" style="left:512px;top:46.4px">EXPORT</div>
<svg class="abs" style="left:570px;top:21px" width="21" height="18" viewBox="0 0 21 18" fill="none" stroke="#e9ddd2" stroke-width="1.1"><rect x="0.6" y="0.6" width="19.8" height="16.8"/><path d="M0.6,8.2 H11.2 V17.4 M11.8,7.6 L17.2,2.8 M12.8,2.8 H17.2 V7"/></svg>
<div class="t tl" style="left:556px;top:46.4px">FULL SCREEN</div>
  <div class="abs" style="left:62.200000000000045px;top:77.30000000000007px;width:1px;height:231px;background:#8a8a8a"></div><div class="abs" style="left:62.200000000000045px;top:307.70000000000005px;width:548px;height:1px;background:#8a8a8a"></div><div class="t yl" style="left:-5.2999999999999545px;top:139.20000000000005px;width:60px">Offline</div><div class="t yl" style="left:-5.2999999999999545px;top:231.70000000000005px;width:60px">Online</div><div class="abs bub" style="left:84.60000000000002px;top:126.60000000000002px;width:40.2px;height:40.2px;background:#fde1cb;color:#1d1b1a"><span>142</span></div><div class="abs bub" style="left:145.70000000000005px;top:121.10000000000002px;width:51.2px;height:51.2px;background:#fde1cb;color:#1d1b1a"><span>293</span></div><div class="abs bub" style="left:227.9000000000001px;top:121.30000000000007px;width:50.8px;height:50.8px;background:#fde1cb;color:#1d1b1a"><span>209</span></div><div class="abs bub" style="left:312.0999999999999px;top:124.30000000000007px;width:44.8px;height:44.8px;background:#fde1cb;color:#1d1b1a"><span>187</span></div><div class="abs bub" style="left:388.70000000000005px;top:121.10000000000002px;width:51.2px;height:51.2px;background:#fde1cb;color:#1d1b1a"><span>289</span></div><div class="abs bub" style="left:468.60000000000014px;top:126.60000000000002px;width:40.2px;height:40.2px;background:#fde1cb;color:#1d1b1a"><span>133</span></div><div class="abs bub" style="left:534.6000000000001px;top:121.10000000000002px;width:51.2px;height:51.2px;background:#fde1cb;color:#1d1b1a"><span>203</span></div><div class="abs bub" style="left:79.10000000000002px;top:215.89999999999998px;width:51.2px;height:51.2px;background:#a9cdfb;color:#111c30"><span>224</span></div><div class="abs bub" style="left:148.9000000000001px;top:219.10000000000002px;width:44.8px;height:44.8px;background:#a9cdfb;color:#111c30"><span>175</span></div><div class="abs bub" style="left:227.9000000000001px;top:216.10000000000002px;width:50.8px;height:50.8px;background:#a9cdfb;color:#111c30"><span>295</span></div><div class="abs bub" style="left:314.4000000000001px;top:221.39999999999998px;width:40.2px;height:40.2px;background:#a9cdfb;color:#111c30"><span>150</span></div><div class="abs bub" style="left:391.89999999999986px;top:219.10000000000002px;width:44.8px;height:44.8px;background:#a9cdfb;color:#111c30"><span>186</span></div><div class="abs bub" style="left:468.60000000000014px;top:221.39999999999998px;width:40.2px;height:40.2px;background:#a9cdfb;color:#111c30"><span>133</span></div><div class="abs bub" style="left:537.8px;top:219.10000000000002px;width:44.8px;height:44.8px;background:#a9cdfb;color:#111c30"><span>163</span></div><div class="t xl" style="left:65.40000000000009px;top:313.70000000000005px;width:60px">Sun</div><div class="t xl" style="left:145.20000000000005px;top:313.70000000000005px;width:60px">Mon</div><div class="t xl" style="left:225.10000000000002px;top:313.70000000000005px;width:60px">Tue</div><div class="t xl" style="left:304.5px;top:313.70000000000005px;width:60px">Wed</div><div class="t xl" style="left:384.29999999999995px;top:313.70000000000005px;width:60px">Thu</div><div class="t xl" style="left:458.60000000000014px;top:313.70000000000005px;width:60px">Fri</div><div class="t xl" style="left:530.6000000000001px;top:313.70000000000005px;width:60px">Sat</div>
</div>
</body></html>
